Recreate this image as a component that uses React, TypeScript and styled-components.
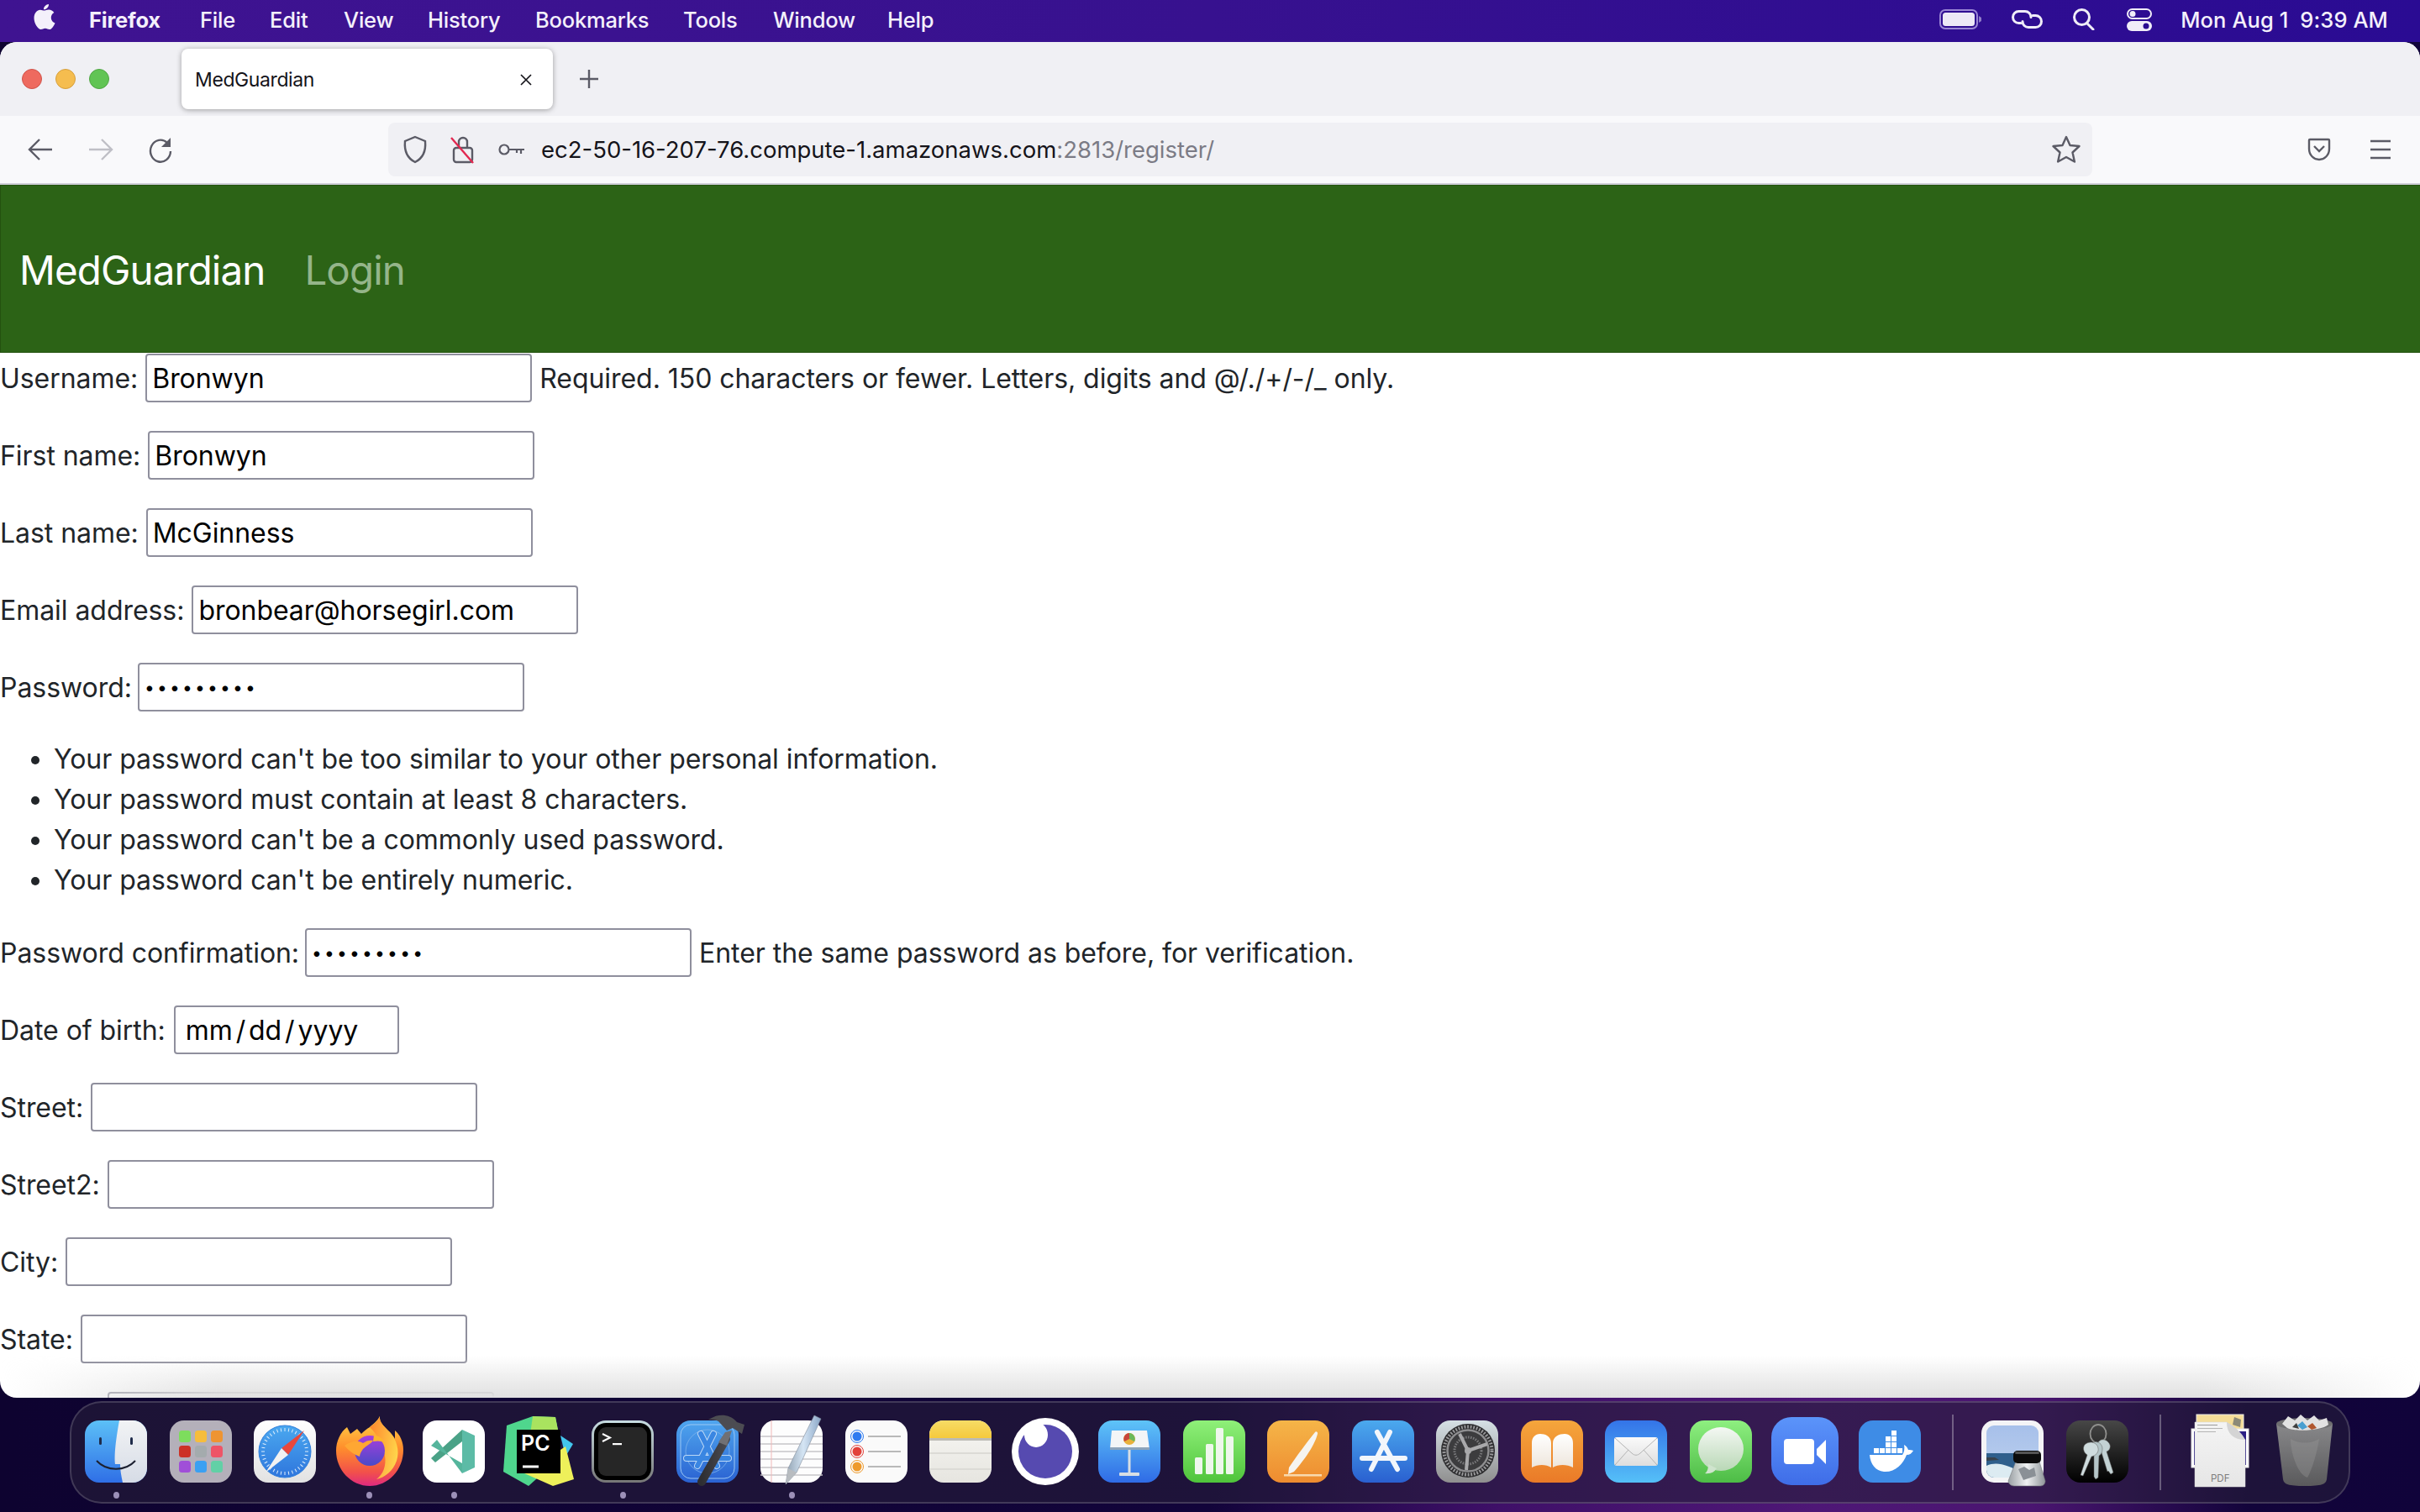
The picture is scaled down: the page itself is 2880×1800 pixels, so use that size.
import React from "react";
import styled, { createGlobalStyle } from "styled-components";

const Global = createGlobalStyle`
  html, body { margin: 0; padding: 0; width: 2880px; height: 1800px; overflow: hidden; background: #12043a; }
  * { box-sizing: border-box; }
`;
const SANS = `Inter, "Liberation Sans", sans-serif`;

const Desktop = styled.div`
  width: 2880px; height: 1800px; display: flex; flex-direction: column; overflow: hidden; font-family: ${SANS};
  background: linear-gradient(90deg, #0e0330 0%, #12043a 50%, #3f1068 62%, #4e1776 75%, #4a1570 84%, #12043a 93%, #10033a 100%);
`;
const MenuBar = styled.header`
  height: 50px; flex: none; display: flex; align-items: center; padding: 0 38px 4px 40px; color: #f4f0fb;
  background: linear-gradient(90deg, #3f1391 0%, #37118f 50%, #2a0b93 100%);
`;
const MenuItem = styled.span<{ $bold?: boolean; $w: number }>`
  font-size: 25.5px; font-weight: ${(p) => (p.$bold ? 700 : 500)}; width: ${(p) => p.$w}px; flex: none; letter-spacing: -0.2px; white-space: nowrap;
`;
const MenuRight = styled.div`
  margin-left: auto; display: flex; align-items: center; font-size: 25.5px; font-weight: 500; letter-spacing: 0.1px; white-space: pre;
`;
const StatusIcon = styled.svg<{ $mr: number }>`
  margin-right: ${(p) => p.$mr}px; flex: none; display: block;
`;
const Window = styled.main`
  height: 1614px; flex: none; position: relative; display: flex; flex-direction: column; background: #fff; border-radius: 20px; overflow: hidden;
`;
const TabBar = styled.div`
  height: 88px; flex: none; display: flex; align-items: center; background: #f0f0f4; padding-left: 26px;
`;
const Light = styled.span<{ $c: string; $br: string }>`
  width: 24px; height: 24px; border-radius: 50%; background: ${(p) => p.$c}; border: 1px solid ${(p) => p.$br}; margin-right: 16px; flex: none;
`;
const Tab = styled.div`
  width: 442px; height: 72px; margin-left: 70px; border-radius: 8px; background: #fff; box-shadow: 0 1px 6px rgba(0,0,0,.35); display: flex; align-items: center; justify-content: space-between;
  padding: 2px 24px 0 16px; font-size: 23px; color: #15141a; letter-spacing: -0.4px; flex: none;
`;
const NewTab = styled.svg`
  margin-left: 31px; flex: none;
`;
const ToolBar = styled.div`
  height: 82px; flex: none; display: flex; align-items: center; background: #f9f9fb; border-bottom: 2px solid #cfcfd8;
`;
const NavBtn = styled.svg<{ $ml: number }>`
  margin-left: ${(p) => p.$ml}px; flex: none; display: block;
`;
const UrlBar = styled.div`
  width: 2028px; height: 64px; margin-left: 257px; border-radius: 8px; background: #f0f0f4; display: flex; align-items: center; padding-left: 17px; flex: none;
`;
const UrlIcon = styled.svg`
  margin-left: 27px; flex: none;
`;
const UrlText = styled.span`
  margin-left: 19px; font-size: 27.5px; color: #15141a; letter-spacing: 0; white-space: nowrap;
`;
const UrlDim = styled.span`
  color: #7b7b85;
`;
const UrlStar = styled.svg`
  margin-left: auto; margin-right: 14px; flex: none;
`;
const Navbar = styled.nav`
  height: 200px; flex: none; background: #2c6316; display: flex; align-items: center; padding: 2px 0 0 22px; font-size: 47.5px; letter-spacing: -0.9px; border: 1px solid #24520f; border-right: none;
`;
const Brand = styled.a`
  color: #fff;
`;
const NavLink = styled.a`
  color: #95b58a; margin-left: 47px;
`;
const Form = styled.form`
  flex: 1; min-height: 0; padding-top: 1px; color: #212529; font-size: 32px; letter-spacing: -0.05px; overflow: hidden;
`;
const Row = styled.div`
  height: 58px; margin-bottom: 34px; display: flex; align-items: center; white-space: nowrap;
`;
const Field = styled.input<{ $w?: number }>`
  width: ${(p) => p.$w ?? 460}px; height: 58px; margin: 0 9px; padding: 0 6px; border: 2px solid #8f8f9d; border-radius: 4px; background: #fff; color: #000;
  font: inherit; letter-spacing: inherit; flex: none; outline: none;
`;
const Dots = styled(Field)`
  letter-spacing: 3.2px; font-size: 21px; margin-left: 7px;
`;
const DateField = styled(Field)`
  padding-left: 12px; word-spacing: -5px; margin-left: 10px;
`;
const LastField = styled(Field)`
  margin-left: 128px;
`;
const Rules = styled.ul`
  margin: -1px 0 33px; padding: 0 0 0 64px; line-height: 48px;
`;
const FadeOverlay = styled.div`
  position: absolute; left: 0; right: 0; bottom: 0; height: 50px; pointer-events: none;
  background: linear-gradient(180deg, rgba(224,224,224,0), rgba(224,224,224,1));
  -webkit-mask-image: linear-gradient(90deg, transparent 0, #000 9%, #000 91%, transparent 100%);
  mask-image: linear-gradient(90deg, transparent 0, #000 9%, #000 91%, transparent 100%);
`;
const Dock = styled.footer`
  height: 122px; margin: 4px 83px 0; flex: none; display: flex; align-items: center; padding-left: 3px; border-radius: 38px; border: 2px solid rgba(255,255,255,.16); background: rgba(38,30,58,.6);
`;
const Cell = styled.div<{ $w?: number }>`
  width: ${(p) => p.$w ?? 100.5}px; height: 100%; flex: none; display: flex; align-items: center; justify-content: center; position: relative; padding-bottom: 2px;
`;
const Dot = styled.span`
  position: absolute; bottom: 4px; left: 50%; margin-left: -3.5px; width: 7px; height: 8px; border-radius: 50%; background: #9c90b8;
`;
const Divider = styled.div<{ $ml: number; $mr: number }>`
  width: 2px; height: 90px; background: rgba(255,255,255,.3); margin: 0 ${(p) => p.$mr}px 0 ${(p) => p.$ml}px; flex: none;
`;
const PcText = styled.text`
  font-family: Inter, "Liberation Sans", sans-serif; font-weight: 600; font-size: 25px; fill: #fff;
`;
const PdfLabel = styled.text`
  font-family: Inter, "Liberation Sans", sans-serif; font-size: 11.5px; fill: #7c7c7c;
`;

const I = ({ children }: { children: React.ReactNode }) => (
  <svg width="90" height="90" viewBox="0 0 90 90">{children}</svg>
);
const G = ({ id, c1, c2 }: { id: string; c1: string; c2: string }) => (
  <linearGradient id={id} x1="0" y1="0" x2="0" y2="1"><stop offset="0" stopColor={c1} /><stop offset="1" stopColor={c2} /></linearGradient>
);

const Finder = () => (
  <I>
    <defs><G id="fa" c1="#5cc0f7" c2="#2f6fe6" /><G id="fb" c1="#f2f3f5" c2="#d6dce6" /></defs>
    <rect x="8" y="8" width="74" height="74" rx="17" fill="url(#fa)" />
    <path d="M49 8H65a17 17 0 0 1 17 17v40a17 17 0 0 1-17 17H53c-2-9-3-16-3-22h-6c-1-10 0-24 5-52z" fill="url(#fb)" />
    <rect x="25" y="28" width="3" height="9" rx="1.5" fill="#1f2b4a" /><rect x="62" y="28" width="3" height="9" rx="1.5" fill="#1f2b4a" />
    <path d="M22 56c12 13 34 13 46 0" fill="none" stroke="#1c2030" strokeWidth="2" />
  </I>
);
const Launchpad = () => {
  const colors = ["#7ddd5d", "#f6bd3c", "#ee9432", "#cc3126", "#a4abad", "#ee5467", "#a04fd8", "#3aa0f2", "#62d0a6"];
  return (
    <I>
      <rect x="8" y="8" width="74" height="74" rx="17" fill="#b4b0ba" />
      {colors.map((c, i) => (
        <rect key={c} x={19 + (i % 3) * 19} y={20 + Math.floor(i / 3) * 18} width="14" height="14" rx="3.5" fill={c} />
      ))}
    </I>
  );
};
const Safari = () => {
  const ticks = Array.from({ length: 36 }, (_, i) => i * 10);
  return (
    <I>
      <defs><G id="sa" c1="#ffffff" c2="#e2e2e2" /><G id="sb" c1="#4aa8ef" c2="#2f76dd" /></defs>
      <rect x="8" y="8" width="74" height="74" rx="17" fill="url(#sa)" />
      <circle cx="45" cy="45" r="31" fill="url(#sb)" stroke="#2f7fdc" />
      {ticks.map((t) => (<line key={t} x1="45" y1="17" x2="45" y2="21" stroke="#dfeefc" strokeWidth="1" transform={`rotate(${t} 45 45)`} />))}
      <path d="M68 20L49 49 41 41z" fill="#e8483c" /><path d="M22 70L41 41l8 8z" fill="#f2f2f2" />
    </I>
  );
};
const Firefox = () => (
  <I>
    <defs>
      <linearGradient id="ffa" x1="0.5" y1="0" x2="0.5" y2="1"><stop offset="0" stopColor="#ffd84a" /><stop offset=".45" stopColor="#ff8f2c" /><stop offset=".8" stopColor="#f2514a" /><stop offset="1" stopColor="#df2a80" /></linearGradient>
      <linearGradient id="ffb" x1="0.5" y1="0" x2="0.5" y2="1"><stop offset="0" stopColor="#a83fdc" /><stop offset="1" stopColor="#4a4ac8" /></linearGradient>
      <linearGradient id="ffc" x1="0" y1="0" x2="1" y2="0.6"><stop offset="0" stopColor="#ff7a2a" /><stop offset="1" stopColor="#ffe04e" /></linearGradient>
    </defs>
    <path d="M57 3c-1 7 5 12 12 19 3 3 5 6 6 8l0-10c6 5 10 13 10 23 0 24-18 43-40 43S5 67 5 44c0-11 5-22 13-28l4 8 8-6 5 6c3-3 6-6 10-8C48 13 54 9 57 3z" fill="url(#ffa)" />
    <path d="M45 16c3-2 9-6 12-13-1 7 5 12 12 19 8 9 12 22 8 34-4 12-14 20-24 22 8-6 12-16 10-28-2-12-8-24-18-34z" fill="url(#ffc)" opacity=".9" />
    <circle cx="45" cy="44" r="18" fill="url(#ffb)" />
    <path d="M15 38c7-5 15-7 22-3 4-3 8-4 12-3-3 4-8 6-12 10-2 3-4 6-4 9-8-3-14-8-18-13z" fill="#ffa733" />
    <path d="M50 26c6 0 10 3 13 9-4-3-9-3-14-2z" fill="#ffb52e" />
  </I>
);
const VSCode = () => (
  <I>
    <rect x="8" y="8" width="74" height="74" rx="17" fill="#fff" />
    <path d="M55 19l15 7v38l-15 7z" fill="#5cbba6" />
    <path d="M55 19v14L23 58l-5-5z" fill="#4aa287" />
    <path d="M55 71V59L18 38l7-7z" fill="#55b59c" />
  </I>
);
const PyCharm = () => (
  <I>
    <path d="M7 14L38 3 65 4 70 30 62 60 33 86 3 69z" fill="#4fd68d" />
    <path d="M38 3L65 4 68 19 30 60z" fill="#a9e35f" />
    <path d="M71 26L86 36 77 51z" fill="#43c6ee" />
    <path d="M77 39L87 78 62 86 28 71z" fill="#eef05a" />
    <rect x="19" y="19" width="52" height="52" fill="#000" />
    <rect x="26" y="61.5" width="19" height="3" fill="#fff" />
    <PcText x="24" y="44">PC</PcText>
  </I>
);
const Terminal = () => (
  <I>
    <defs><G id="ta1" c1="#c7dde2" c2="#767676" /></defs>
    <rect x="8" y="8" width="74" height="74" rx="17" fill="url(#ta1)" />
    <rect x="11" y="11" width="68" height="68" rx="14" fill="#000" />
    <rect x="16" y="16" width="58" height="58" rx="9" fill="#262626" />
    <path d="M21 24l9 4.500-9 4.500" fill="none" stroke="#fff" strokeWidth="2" /><rect x="33" y="35" width="11" height="2.2" fill="#fff" />
  </I>
);
const Xcode = () => (
  <I>
    <defs>
      <G id="xa" c1="#4fa6ee" c2="#2a62d2" />
      <linearGradient id="xb" x1="0" y1="0" x2="1" y2="0"><stop offset="0" stopColor="#2e2e32" /><stop offset="1" stopColor="#4a4a50" /></linearGradient>
    </defs>
    <rect x="8" y="8" width="74" height="74" rx="17" fill="url(#xa)" />
    <rect x="13" y="13" width="64" height="64" rx="12" fill="none" stroke="#9cc8f4" strokeWidth="1" />
    <circle cx="45" cy="45" r="26" fill="none" stroke="#7fb4ec" strokeWidth=".8" />
    <path d="M37 24L56 62M52 24L33 62M20 53H70" stroke="#bcd8f6" strokeWidth="8" strokeLinecap="round" fill="none" />
    <path d="M37 24L56 62M52 24L33 62M20 53H70" stroke="#3a86e2" strokeWidth="6" strokeLinecap="round" fill="none" />
    <path d="M67 30L38 81" stroke="url(#xb)" strokeWidth="10" strokeLinecap="round" />
    <path d="M66 22L58 34 68 38 74 20z" fill="#707074" />
    <path d="M50 5C58 0 72 0 80 10l9 3-3 11-11-7-7 3-10-11c-4-2-8-2-12-2z" fill="#4c4c52" />
  </I>
);
const TextEdit = () => (
  <I>
    <defs><linearGradient id="tea" x1="0" y1="0" x2="1" y2="0"><stop offset="0" stopColor="#8fa0b0" /><stop offset=".5" stopColor="#d5e5f4" /><stop offset="1" stopColor="#8aa6c6" /></linearGradient></defs>
    <rect x="8" y="8" width="74" height="74" rx="17" fill="#fdfdfd" />
    {[27, 36, 45, 54, 64, 73].map((y) => (<line key={y} x1="8" y1={y} x2="82" y2={y} stroke="#c6c4c8" strokeWidth="1.5" />))}
    <line x1="21" y1="8" x2="21" y2="82" stroke="#f0b8b8" strokeWidth="1" />
    <path d="M72 2L80 6 51 70 38 84 41 65z" fill="url(#tea)" stroke="#7f8c9a" strokeWidth=".6" />
    <path d="M41 65L51 70 38 84z" fill="#b8bcc0" />
  </I>
);
const Reminders = () => (
  <I>
    <rect x="8" y="8" width="74" height="74" rx="17" fill="#fafafa" />
    {[["#2f7bf0", 27], ["#e2413a", 45], ["#ee9a2c", 63]].map(([c, y]) => (
      <g key={String(c)}>
        <circle cx="22" cy={y as number} r="5.500" fill={c as string} />
        <circle cx="22" cy={y as number} r="7.500" fill="none" stroke={c as string} strokeWidth="1" />
        <rect x="35" y={(y as number) - 1} width="39" height="2" fill="#b9b9b9" />
      </g>
    ))}
  </I>
);
const Notes = () => (
  <I>
    <defs><G id="na" c1="#f7dc66" c2="#f5c93c" /><G id="nb" c1="#f8f7f3" c2="#e6e5e0" /></defs>
    <rect x="8" y="8" width="74" height="74" rx="17" fill="url(#nb)" />
    <path d="M8 25a17 17 0 0 1 17-17h40a17 17 0 0 1 17 17v4H8z" fill="url(#na)" />
    <rect x="8" y="29" width="74" height="3" fill="#bdbcb5" /><rect x="8" y="46" width="74" height="2" fill="#dcdbd6" /><rect x="8" y="65" width="74" height="2" fill="#dcdbd6" />
  </I>
);
const Eye = () => (
  <I>
    <ellipse cx="45" cy="45" rx="40" ry="40" fill="#fff" />
    <ellipse cx="45" cy="45" rx="32" ry="32" fill="#564ab0" />
    <ellipse cx="34" cy="25" rx="14" ry="15" fill="#fff" />
  </I>
);
const Keynote = () => (
  <I>
    <defs><G id="ka" c1="#5ec4f8" c2="#2f6be6" /></defs>
    <rect x="8" y="8" width="74" height="74" rx="17" fill="url(#ka)" />
    <path d="M24 20H66L69 42H22z" fill="#f3f5f7" /><rect x="22" y="40" width="47" height="3" fill="#8da4bb" />
    <rect x="43.5" y="43" width="3" height="28" fill="#d8dee4" /><rect x="33" y="70" width="24" height="4" rx="1" fill="#d8dee4" />
    <circle cx="45" cy="30" r="7" fill="#e9b13c" /><path d="M45 30V23a7 7 0 0 1 6 10z" fill="#6bb85a" /><path d="M45 30l-6 3a7 7 0 0 1 6-10z" fill="#c8443b" />
  </I>
);
const Numbers = () => (
  <I>
    <defs><G id="nua" c1="#8ff079" c2="#4fc43b" /></defs>
    <rect x="8" y="8" width="74" height="74" rx="17" fill="url(#nua)" />
    {[[22, 52, 20], [35, 36, 36], [47, 17, 55], [59, 27, 45]].map(([x, y, h]) => (<rect key={x} x={x} y={y} width="9" height={h} rx="1.5" fill="#eef7ec" />))}
  </I>
);
const Pages = () => (
  <I>
    <defs><G id="pa" c1="#f5b548" c2="#ee8c30" /></defs>
    <rect x="8" y="8" width="74" height="74" rx="17" fill="url(#pa)" />
    <path d="M65 22c1-2 4 0 3 2-4 16-20 36-28 45l-7 3 1-8c8-12 22-31 31-42z" fill="#f6f4ef" />
    <rect x="28" y="72" width="45" height="2.500" fill="#f8d9ae" />
  </I>
);
const AppStore = () => (
  <I>
    <defs><G id="aa" c1="#4ba9ee" c2="#2a60d0" /></defs>
    <rect x="8" y="8" width="74" height="74" rx="17" fill="url(#aa)" />
    <path d="M38 22l24 44M53 22L31 66M20 53H71" stroke="#f2f6fb" strokeWidth="6" strokeLinecap="round" fill="none" />
  </I>
);
const SysPrefs = () => (
  <I>
    <defs><G id="spa" c1="#d6e0e5" c2="#8f8f8f" /></defs>
    <rect x="8" y="8" width="74" height="74" rx="17" fill="url(#spa)" />
    <circle cx="46" cy="44" r="32" fill="#2e2e30" />
    <circle cx="46" cy="44" r="28.500" fill="none" stroke="#9a9a9c" strokeWidth="4" strokeDasharray="1.800 1.800" />
    <circle cx="46" cy="44" r="24.500" fill="#3c3c3e" stroke="#8e8e90" strokeWidth="2.500" />
    <circle cx="46" cy="44" r="16" fill="none" stroke="#7a7a7c" strokeWidth="3" strokeDasharray="1.500 1.500" />
    <path d="M46 44L36 24M46 44L69 36M46 44L44 67" stroke="#a9a9ab" strokeWidth="4" />
    <circle cx="46" cy="44" r="4" fill="#a9a9ab" />
  </I>
);
const Books = () => (
  <I>
    <defs><G id="ba" c1="#f5a63c" c2="#ea7a28" /><G id="bb" c1="#ffffff" c2="#eee6dc" /></defs>
    <rect x="8" y="8" width="74" height="74" rx="17" fill="url(#ba)" />
    <path d="M21 35c0-7 4-11 10-11s13 3 13 11v29c-6-4-16-4-23 0z" fill="url(#bb)" />
    <path d="M70 35c0-7-4-11-10-11s-14 3-14 11v29c6-4 17-4 24 0z" fill="url(#bb)" />
  </I>
);
const Mail = () => (
  <I>
    <defs><G id="ma" c1="#3474e8" c2="#55c0f8" /><G id="mb" c1="#fafafa" c2="#dedede" /></defs>
    <rect x="8" y="8" width="74" height="74" rx="17" fill="url(#ma)" />
    <rect x="19" y="28" width="52" height="34" rx="3" fill="url(#mb)" />
    <path d="M20 29L40 47c3 3 7 3 10 0L70 29M20 61L36 43M70 61L54 43" stroke="#b4b4b4" strokeWidth="1" fill="none" />
  </I>
);
const Messages = () => (
  <I>
    <defs><G id="mea" c1="#8eef80" c2="#4dbc46" /><G id="meb" c1="#f4f8f3" c2="#b9d8b6" /></defs>
    <rect x="8" y="8" width="74" height="74" rx="17" fill="url(#mea)" />
    <ellipse cx="45" cy="42" rx="27" ry="26" fill="url(#meb)" />
    <path d="M30 60c0 5-1 9-4 11 6 1 11-1 14-6z" fill="#cfe4cd" />
  </I>
);
const Zoom = () => (
  <I>
    <defs><G id="za" c1="#5b94fa" c2="#3f6de8" /></defs>
    <rect x="5" y="4" width="80" height="81" rx="24" fill="url(#za)" />
    <rect x="20" y="30" width="36" height="30" rx="4" fill="#fff" /><path d="M59 42l11-11v29L59 49z" fill="#fff" />
  </I>
);
const Docker = () => (
  <I>
    <rect x="8" y="8" width="74" height="74" rx="17" fill="#3e8ce6" />
    {[[26,41],[33,41],[40,41],[47,41],[54,41],[40,34],[47,34],[40,27],[47,27],[47,20]].map(([x, y]) => (<rect key={`${x}-${y}`} x={x} y={y} width="6" height="6" fill="#fff" />))}
    <path d="M21 49H60c2-3 3-7 2-12 2 1 4 3 5 6 2 0 4 0 6 1-2 3-4 5-8 5-4 11-14 21-27 20-10-1-16-9-17-20z" fill="#fff" />
  </I>
);
const Preview = () => (
  <I>
    <defs>
      <G id="pva" c1="#a7c0ea" c2="#bcd0ee" />
      <linearGradient id="pvb" x1="0" y1="0" x2="1" y2="0"><stop offset="0" stopColor="#9aa0a4" /><stop offset=".5" stopColor="#f0f2f3" /><stop offset="1" stopColor="#8e9498" /></linearGradient>
    </defs>
    <rect x="8" y="8" width="74" height="74" rx="15" fill="#f4f4f6" />
    <rect x="14" y="14" width="62" height="62" rx="9" fill="url(#pva)" />
    <path d="M14 47H76V67a9 9 0 0 1-9 9H23a9 9 0 0 1-9-9z" fill="#2f5f8c" />
    <path d="M14 52l10 0 5 3-15 1z" fill="#38424c" />
    <path d="M14 62c14-6 24 0 44 8v6H23a9 9 0 0 1-9-9z" fill="#dcebf2" />
    <path d="M49 57H77L84 80c0 3-2 6-6 6H47c-4 0-7-3-7-6z" fill="url(#pvb)" stroke="#76797c" strokeWidth=".6" />
    <path d="M52 66l7-3 6 4 6-3 2 10-15 5z" fill="#8a9096" />
    <rect x="46" y="44" width="33" height="15" rx="5" fill="#0c0c0c" />
    <rect x="48" y="45" width="29" height="3" rx="1.500" fill="#555" />
  </I>
);
const KeyShape = ({ d, fill }: { d: string; fill: string }) => (
  <path d={d} fill={fill} stroke="#5e5e5c" strokeWidth=".5" />
);
const Keychain = () => (
  <I>
    <defs><G id="kca" c1="#474747" c2="#000" /></defs>
    <rect x="8" y="8" width="74" height="74" rx="17" fill="url(#kca)" />
    <ellipse cx="46" cy="24" rx="9.500" ry="11" fill="none" stroke="#8f8f8d" strokeWidth="1.800" />
    <KeyShape d="M48 32c4-3 10 0 12 5 1 4-1 7-4 8l8 25-3 2-3-4-1 1-8-26c-4-1-6-8-1-11z" fill="#c3d2d4" />
    <KeyShape d="M40 34c6-2 11 2 11 8 0 4-2 7-4 8l-1 26-3 2-2-3V50c-4-2-6-13-1-16z" fill="#b5c6c9" />
    <KeyShape d="M31 36c5-4 14-2 15 5 1 5-3 9-8 10l-10 23-3-1 8-24c-5-3-6-10-2-13z" fill="#cfdcde" />
  </I>
);
const Pdf = () => (
  <I>
    <defs><G id="pda" c1="#f4f4f4" c2="#e6e6e6" /></defs>
    <rect x="17" y="1" width="56" height="24" fill="#f5dd98" stroke="#e9e9e9" />
    <path d="M62 4l8 3-1 9-9-3z" fill="#8c8a78" />
    <rect x="11" y="18" width="68" height="46" fill="#fff" stroke="#e4e4e4" />
    <rect x="14" y="21" width="62" height="40" fill="#2b1f84" />
    <path d="M15 10H53L75 31V87H15z" fill="url(#pda)" stroke="#d8d8d8" strokeWidth=".5" />
    <path d="M53 10c0 14 8 21 22 21-4-8-12-16-22-21z" fill="#d4d4d4" />
    <rect x="18" y="13" width="24" height="1" fill="#9a9a9a" /><rect x="18" y="17" width="30" height="1" fill="#b4b4b4" /><rect x="18" y="21" width="22" height="1" fill="#b4b4b4" />
    <PdfLabel x="34" y="81">PDF</PdfLabel>
  </I>
);
const Trash = () => (
  <I>
    <defs><G id="tra" c1="#88888a" c2="#5a5a5c" /></defs>
    <path d="M11 12H78L71 78c-1 6-6 8-26 8s-25-2-26-8z" fill="url(#tra)" />
    <path d="M28 30c10 6 24 6 34 0-2 14-8 36-14 46-12-4-20-30-20-46z" fill="#9a9a9c" opacity=".35" />
    <ellipse cx="44.500" cy="12" rx="33.500" ry="7" fill="#6e6e70" />
    <path d="M18 12l7-9 8 5 7-7 8 7 8-6 6 6 9-3 2 8c-8 7-38 9-49 4z" fill="#e2e2e2" />
    <path d="M36 14l6-5 6 7-6 3z" fill="#4a9fd0" /><path d="M48 15l6-4 5 6-6 2z" fill="#b0562e" /><path d="M30 16l5-5 3 7z" fill="#3f3f3f" />
  </I>
);

const mainApps: { C: React.FC; on?: boolean }[] = [
  { C: Finder, on: true }, { C: Launchpad }, { C: Safari }, { C: Firefox, on: true }, { C: VSCode, on: true }, { C: PyCharm },
  { C: Terminal, on: true }, { C: Xcode }, { C: TextEdit, on: true }, { C: Reminders }, { C: Notes }, { C: Eye }, { C: Keynote },
  { C: Numbers }, { C: Pages }, { C: AppStore }, { C: SysPrefs }, { C: Books }, { C: Mail }, { C: Messages }, { C: Zoom }, { C: Docker },
];

const fields: { label: string; value?: string; help?: string }[] = [
  { label: "Username:", value: "Bronwyn", help: "Required. 150 characters or fewer. Letters, digits and @/./+/-/_ only." },
  { label: "First name:", value: "Bronwyn" },
  { label: "Last name:", value: "McGinness" },
  { label: "Email address:", value: "bronbear@horsegirl.com" },
];
const lower = ["Street:", "Street2:", "City:", "State:"];
const rules = [
  "Your password can't be too similar to your other personal information.",
  "Your password must contain at least 8 characters.",
  "Your password can't be a commonly used password.",
  "Your password can't be entirely numeric.",
];
const dots = "•••••••••";

export default function App() {
  return (
    <Desktop>
      <Global />
      <MenuBar>
        <MenuItem $w={66}>
          <svg width="26" height="32" viewBox="0 0 26 32" fill="#f4f0fb"><path d="M18 1c.3 3-2.600 6.500-6 6.300C11.700 4 15 1.200 18 1zM12.500 8.600c1.500 0 3-1.200 5.500-1.200 2.500 0 5 1.300 6.300 3.500-5.300 3-4.300 10.500 1.200 12.500-1.300 3.300-4 7.600-6.700 7.600-2 0-2.700-1.300-5-1.300s-3.200 1.300-5 1.300C5 31 .5 23.500.5 17.500c0-6 3.800-9.800 7.300-9.800 2 0 3.500 .9 4.700 .9z" /></svg>
        </MenuItem>
        <MenuItem $bold $w={132}>Firefox</MenuItem>
        <MenuItem $w={83}>File</MenuItem>
        <MenuItem $w={88}>Edit</MenuItem>
        <MenuItem $w={100}>View</MenuItem>
        <MenuItem $w={128}>History</MenuItem>
        <MenuItem $w={176}>Bookmarks</MenuItem>
        <MenuItem $w={107}>Tools</MenuItem>
        <MenuItem $w={136}>Window</MenuItem>
        <MenuItem $w={60}>Help</MenuItem>
        <MenuRight>
          <StatusIcon $mr={35} width="51" height="24" viewBox="0 0 51 24">
            <rect x="1" y="1" width="44" height="22" rx="6" fill="none" stroke="#9a86d4" strokeWidth="2" />
            <rect x="4" y="4" width="38" height="16" rx="3.500" fill="#ece8f6" />
            <path d="M47 8l3 2v4l-3 2z" fill="#8f7cc8" />
          </StatusIcon>
          <StatusIcon $mr={36} width="37" height="22" viewBox="0 0 37 22" fill="none" stroke="#f0edf8" strokeWidth="3" strokeLinecap="round">
            <path d="M11 15.500H8.500a7 7 0 0 1 0-14H16a7 7 0 0 1 7 7" /><path d="M25 6.500h3.500a7 7 0 0 1 0 14H20a7 7 0 0 1-7-7" />
          </StatusIcon>
          <StatusIcon $mr={38} width="26" height="26" viewBox="0 0 26 26" fill="none" stroke="#f0edf8" strokeWidth="3">
            <circle cx="10.500" cy="10.500" r="9" /><path d="M17 18l7 7" strokeLinecap="round" />
          </StatusIcon>
          <StatusIcon $mr={34} width="30" height="27" viewBox="0 0 30 27">
            <rect x="1" y="1" width="28" height="11" rx="5.500" fill="none" stroke="#f0edf8" strokeWidth="2" />
            <circle cx="7" cy="6.500" r="3.500" fill="#f0edf8" />
            <rect x="0" y="15" width="30" height="12" rx="6" fill="#f0edf8" />
            <circle cx="23" cy="21" r="3.500" fill="#2a0c90" />
          </StatusIcon>
          Mon Aug 1  9:39 AM
        </MenuRight>
      </MenuBar>
      <Window>
        <TabBar>
          <Light $c="#ee6a5f" $br="#d0534a" />
          <Light $c="#f5bd4f" $br="#d69f3c" />
          <Light $c="#61c454" $br="#50a644" />
          <Tab>
            MedGuardian
            <svg width="16" height="16" viewBox="0 0 16 16" stroke="#15141a" strokeWidth="1.700"><path d="M2 2l12 12M14 2L2 14" /></svg>
          </Tab>
          <NewTab width="24" height="24" viewBox="0 0 24 24" stroke="#5b5b66" strokeWidth="2.400"><path d="M12 1v22M1 12h22" /></NewTab>
        </TabBar>
        <ToolBar>
          <NavBtn $ml={33} width="30" height="30" viewBox="0 0 30 30" fill="none" stroke="#5b5b66" strokeWidth="2.400"><path d="M29 15H3M14 3L2 15l12 12" /></NavBtn>
          <NavBtn $ml={42} width="30" height="30" viewBox="0 0 30 30" fill="none" stroke="#bfbfc6" strokeWidth="2.400"><path d="M1 15H27M16 3l12 12-12 12" /></NavBtn>
          <NavBtn $ml={42} width="28" height="32" viewBox="0 0 28 32" fill="none" stroke="#5b5b66" strokeWidth="2.400"><path d="M22 8A12 13 0 1 0 26 18" /><path d="M26 2v11H15z" fill="#5b5b66" stroke="none" /></NavBtn>
          <UrlBar>
            <svg width="30" height="34" viewBox="0 0 30 34" fill="none" stroke="#5b5b66" strokeWidth="2.400"><path d="M15 2l12 5c1 11-2 20-12 25C5 27 2 18 3 7z" /></svg>
            <UrlIcon width="30" height="34" viewBox="0 0 30 34" fill="none"><path d="M10 14V8a5 5 0 0 1 10 0v6" stroke="#5b5b66" strokeWidth="2.400" /><rect x="4" y="15" width="22" height="17" rx="3" stroke="#5b5b66" strokeWidth="2.400" /><path d="M1 3l26 30" stroke="#e22850" strokeWidth="2.400" /></UrlIcon>
            <UrlIcon width="32" height="18" viewBox="0 0 32 18" fill="none" stroke="#5b5b66" strokeWidth="2.200"><circle cx="7" cy="9" r="5.500" /><path d="M12.500 9H31M27 9v5M22 9v4" /></UrlIcon>
            <UrlText>ec2-50-16-207-76.compute-1.amazonaws.com<UrlDim>:2813/register/</UrlDim></UrlText>
            <UrlStar width="34" height="34" viewBox="0 0 34 34" fill="none" stroke="#5b5b66" strokeWidth="2.400" strokeLinejoin="round"><path d="M17 2l4.500 10 11 1-8 7.500 2.400 11L17 26l-9.900 5.500 2.400-11-8-7.500 11-1z" /></UrlStar>
          </UrlBar>
          <NavBtn $ml={256} width="28" height="28" viewBox="0 0 28 28" fill="none" stroke="#5b5b66" strokeWidth="2.400"><path d="M3 2H25a1 1 0 0 1 1 1V13C26 21 20 26 14 26S2 21 2 13V3a1 1 0 0 1 1-1z" /><path d="M8 10l6 6 6-6" /></NavBtn>
          <NavBtn $ml={45} width="28" height="26" viewBox="0 0 28 26" stroke="#5b5b66" strokeWidth="2.400"><path d="M2 3h24M2 13h24M2 23h24" /></NavBtn>
        </ToolBar>
        <Navbar>
          <Brand>MedGuardian</Brand>
          <NavLink>Login</NavLink>
        </Navbar>
        <Form>
          {fields.map((f) => (
            <Row key={f.label}>
              {f.label}
              <Field readOnly value={f.value} />
              {f.help}
            </Row>
          ))}
          <Row>Password:<Dots readOnly value={dots} /></Row>
          <Rules>{rules.map((r) => (<li key={r}>{r}</li>))}</Rules>
          <Row>Password confirmation:<Dots readOnly value={dots} />Enter the same password as before, for verification.</Row>
          <Row>Date of birth:<DateField $w={268} readOnly value="mm / dd / yyyy" /></Row>
          {lower.map((l) => (<Row key={l}>{l}<Field readOnly value="" /></Row>))}
          <Row><LastField readOnly value="" /></Row>
        </Form>
        <FadeOverlay />
      </Window>
      <Dock>
        {mainApps.map(({ C, on }, i) => (
          <Cell key={i}><C />{on && <Dot />}</Cell>
        ))}
        <Divider $ml={24} $mr={20} />
        <Cell><Preview /></Cell>
        <Cell><Keychain /></Cell>
        <Divider $ml={24} $mr={20} />
        <Cell><Pdf /></Cell>
        <Cell><Trash /></Cell>
      </Dock>
    </Desktop>
  );
}
